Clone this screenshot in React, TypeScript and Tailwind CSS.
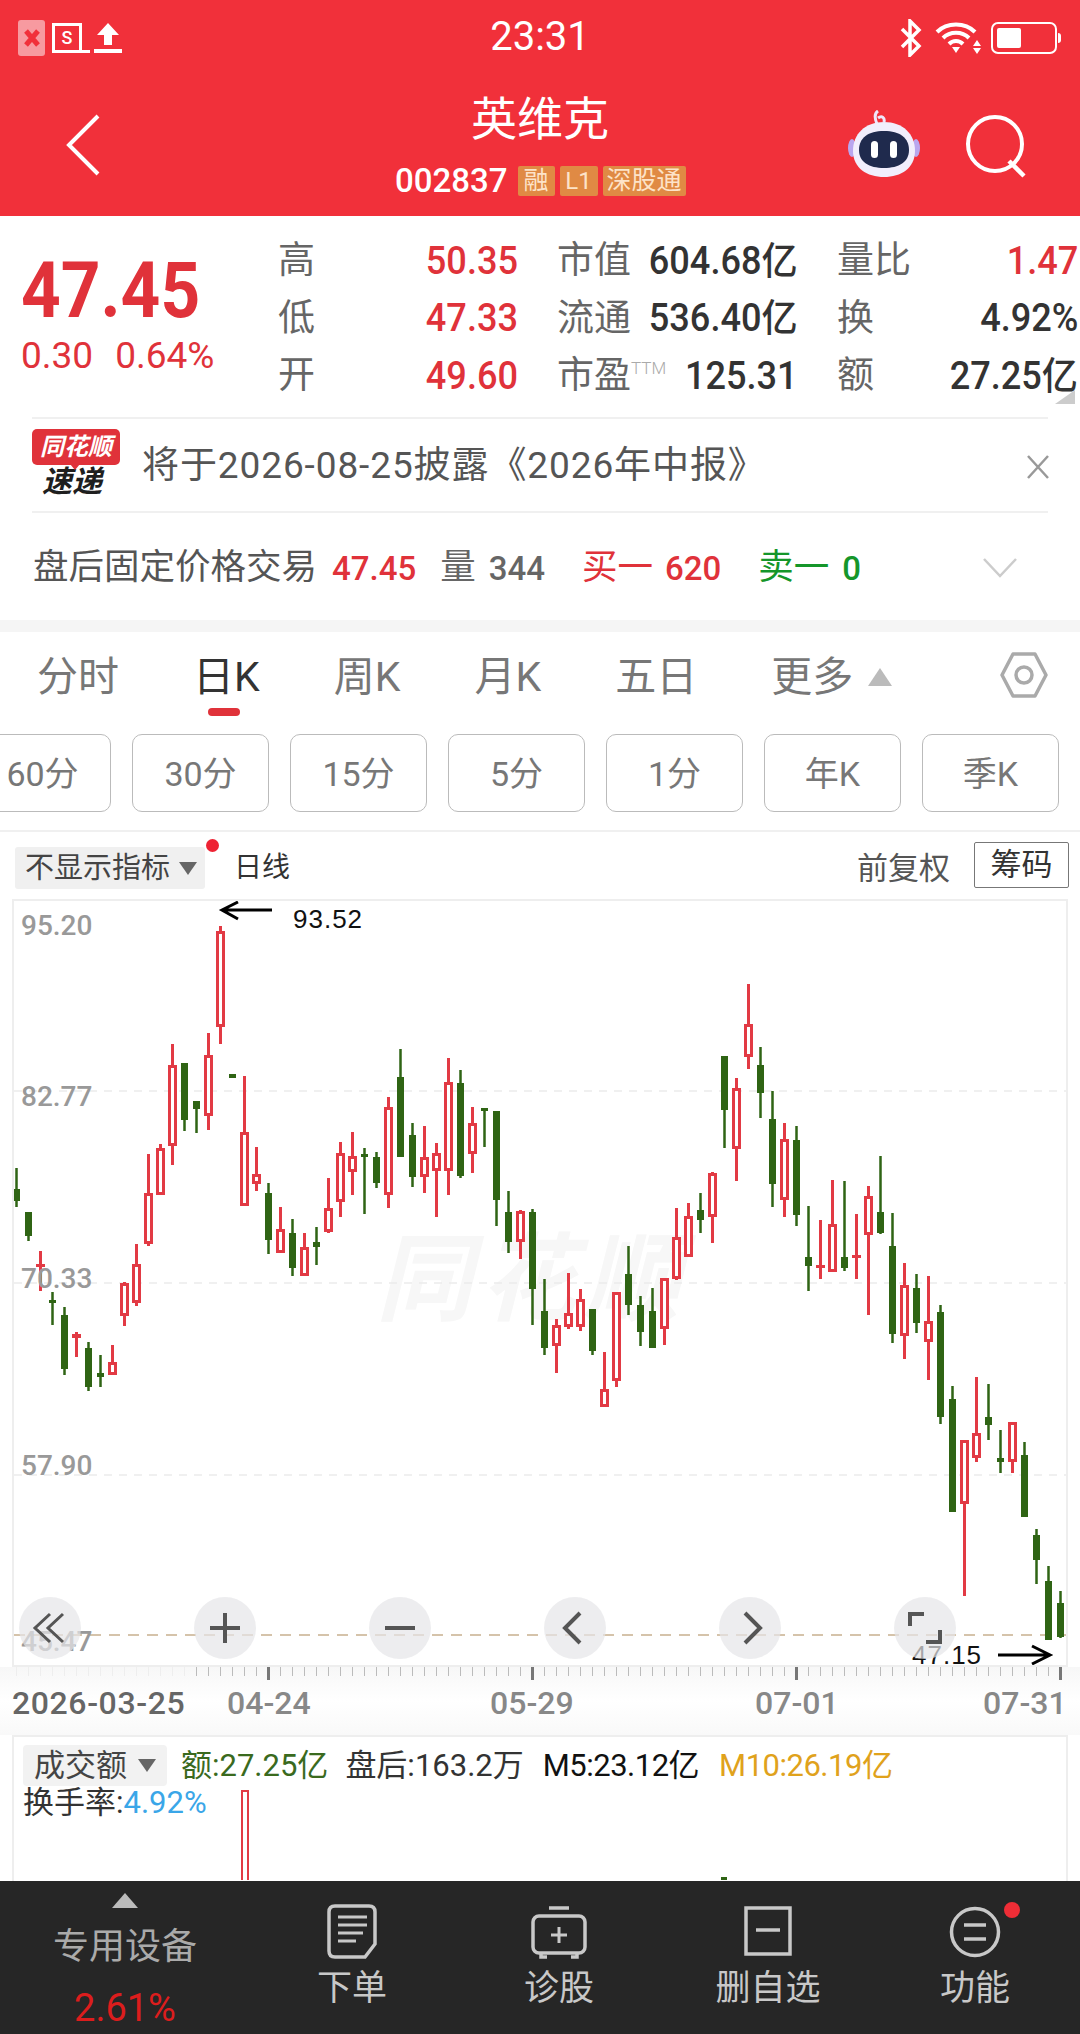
import React from "react";

type C = [string, number, number, number, number];
const candles: C[] = [
  ["g",1168,1189,1201,1207],["g",1212,1212,1236,1241],["r",1251,1264,1267,1291],["g",1292,1300,1303,1325],
  ["g",1307,1315,1369,1375],["r",1332,1334,1338,1357],["g",1342,1348,1387,1391],["g",1355,1373,1377,1387],
  ["r",1345,1362,1375,1375],["r",1282,1283,1316,1326],["r",1244,1264,1303,1306],["r",1154,1193,1244,1246],
  ["r",1144,1148,1195,1195],["r",1044,1065,1146,1165],["g",1063,1063,1120,1131],["g",1101,1101,1109,1133],
  ["r",1033,1055,1116,1130],["r",926,931,1027,1044],["g",1074,1074,1078,1078],["r",1076,1132,1206,1206],
  ["r",1147,1174,1184,1191],["g",1183,1193,1240,1254],["r",1207,1229,1253,1253],["g",1219,1233,1268,1276],
  ["r",1233,1247,1276,1276],["g",1227,1242,1247,1265],["r",1178,1208,1232,1233],["r",1142,1153,1202,1217],
  ["r",1132,1156,1172,1195],["g",1148,1154,1157,1214],["g",1152,1157,1183,1188],["r",1097,1107,1195,1208],
  ["g",1049,1077,1157,1157],["g",1123,1135,1177,1187],["r",1126,1157,1177,1193],["r",1143,1153,1171,1217],
  ["r",1058,1082,1171,1195],["g",1070,1083,1176,1178],["r",1107,1123,1154,1173],["g",1108,1108,1110,1147],
  ["g",1111,1111,1200,1226],["g",1191,1212,1242,1253],["r",1210,1211,1242,1259],["g",1209,1212,1289,1325],
  ["g",1279,1311,1348,1355],["r",1319,1325,1346,1373],["r",1273,1313,1327,1329],["r",1289,1299,1327,1331],
  ["g",1309,1309,1351,1355],["r",1352,1389,1407,1407],["r",1292,1292,1381,1387],["g",1246,1274,1305,1315],
  ["g",1296,1305,1332,1346],["g",1288,1311,1348,1348],["r",1278,1278,1329,1345],["r",1208,1237,1279,1280],
  ["r",1203,1216,1257,1257],["g",1193,1210,1220,1233],["r",1172,1173,1217,1243],["g",1056,1056,1110,1148],
  ["r",1078,1088,1149,1181],["r",984,1024,1057,1069],["g",1047,1065,1093,1118],["g",1091,1119,1184,1207],
  ["r",1123,1139,1200,1217],["g",1126,1140,1215,1226],["g",1206,1257,1266,1291],["r",1220,1265,1268,1279],
  ["r",1180,1224,1272,1272],["g",1181,1257,1268,1271],["r",1214,1255,1258,1279],["r",1186,1196,1235,1315],
  ["g",1156,1212,1233,1234],["g",1213,1246,1334,1343],["r",1263,1285,1336,1359],["g",1274,1288,1323,1333],
  ["r",1276,1321,1342,1380],["g",1305,1312,1417,1424],["g",1386,1399,1512,1512],["r",1440,1440,1504,1596],
  ["r",1377,1433,1458,1462],["g",1384,1417,1425,1440],["g",1430,1458,1462,1473],["r",1422,1422,1462,1473],
  ["g",1442,1455,1517,1517],["g",1529,1535,1560,1584],["g",1566,1581,1640,1640],["g",1591,1603,1637,1638],
];
const RED = "#e23a44";
const GREEN = "#2f6414";

function Candle({ c, i }: { c: C; i: number }) {
  const x = 16.5 + 12 * i;
  const [t, h, top, bot, l] = c;
  if (t === "r") {
    const small = bot - top < 8;
    return (
      <g>
        <rect x={x - 1.5} y={h} width={3} height={l - h} fill={RED} />
        {small ? (
          <rect x={x - 4.5} y={top} width={9} height={Math.max(bot - top, 3)} fill={RED} />
        ) : (
          <rect x={x - 3} y={top + 1.5} width={6} height={bot - top - 3} fill="#fff" stroke={RED} strokeWidth={3} />
        )}
      </g>
    );
  }
  return (
    <g>
      <rect x={x - 1.25} y={h} width={2.5} height={l - h} fill={GREEN} />
      <rect x={x - 3.5} y={top} width={7} height={Math.max(bot - top, 3)} fill={GREEN} />
    </g>
  );
}

function StatusBar() {
  return (
    <div className="relative h-[76px] flex items-center justify-between pl-[18px] pr-[20px]">
      <div className="flex items-center">
        <div className="w-[27px] h-[36px] bg-[#f79aa0] rounded-[3px] flex items-center justify-center">
          <svg width="18" height="20" viewBox="0 0 18 20"><path d="M3 3 L15 17 M15 3 L3 17" stroke="#f1303a" strokeWidth="5" /></svg>
        </div>
        <div className="ml-[7px] w-[30px] h-[30px] border-[3px] border-white relative flex items-center justify-center text-[18px] leading-none font-medium text-white">
          S
          <div className="absolute -left-[3px] -bottom-[3px] w-[38px] h-[3px] bg-white" />
        </div>
        <svg className="ml-[12px]" width="28" height="32" viewBox="0 0 28 32">
          <path d="M14 1 L25 13 H18 V23 H10 V13 H3 Z" fill="#fff" />
          <rect x="0" y="27" width="28" height="4" fill="#fff" />
        </svg>
      </div>
      <div className="absolute left-0 right-0 top-[13px] text-center text-white text-[40px] leading-[48px]">23:31</div>
      <div className="flex items-center">
        <svg width="24" height="38" viewBox="0 0 24 38">
          <path d="M3 10 L20 27 L11 36 V2 L20 11 L3 28" fill="none" stroke="#fff" strokeWidth="3.5" />
        </svg>
        <svg className="ml-[12px]" width="46" height="32" viewBox="0 0 46 32">
          <path d="M2 10 C12 0 30 0 40 10" fill="none" stroke="#fff" strokeWidth="4" />
          <path d="M8 16 C15 9 27 9 34 16" fill="none" stroke="#fff" strokeWidth="4" />
          <path d="M14 22 C18 18 24 18 28 22" fill="none" stroke="#fff" strokeWidth="4" />
          <path d="M17 25 H25 L21 31 Z" fill="#fff" />
          <path d="M42 18 L46 24 H38 Z M38 26 H46 L42 32 Z" fill="#fff" />
        </svg>
        <div className="ml-[13px] w-[66px] h-[32px] border-2 border-white rounded-[7px] p-[4px] relative -translate-x-[3px]">
          <div className="w-[24px] h-full bg-white rounded-[2px]" />
          <div className="absolute -right-[6px] top-[9px] w-[3px] h-[10px] bg-white rounded-r" />
        </div>
      </div>
    </div>
  );
}

function Robot() {
  return (
    <svg width="74" height="68" viewBox="0 0 74 68">
      <path d="M30 14 C27 7 28 3 31 1 M31 8 C35 5 38 8 37 12" fill="none" stroke="#efe7fb" strokeWidth="3" />
      <ellipse cx="5" cy="38" rx="4" ry="9" fill="#b9a6ee" />
      <ellipse cx="69" cy="38" rx="4" ry="9" fill="#b9a6ee" />
      <path d="M37 12 C56 12 68 24 68 41 C68 58 54 67 37 67 C20 67 6 58 6 41 C6 24 18 12 37 12 Z" fill="#f1eefc" />
      <path d="M37 21 C53 21 62 28 62 40 C62 52 52 58 37 58 C22 58 12 52 12 40 C12 28 21 21 37 21 Z" fill="#1f2a4d" />
      <rect x="24" y="31" width="7" height="17" rx="3.5" fill="#fff" />
      <rect x="43" y="31" width="7" height="17" rx="3.5" fill="#fff" />
    </svg>
  );
}

function Header() {
  return (
    <div className="shrink-0 h-[216px] bg-[#f1303a] text-white">
      <StatusBar />
      <div className="relative h-[140px]">
        <svg className="absolute left-[66px] top-[38px]" width="34" height="62" viewBox="0 0 34 62">
          <path d="M32 2 L3 31 L32 60" fill="none" stroke="#fff" strokeWidth="4" />
        </svg>
        <div className="text-center text-[46px] leading-[56px] pt-[15px]">英维克</div>
        <div className="absolute left-[395px] top-[90px] flex items-center">
          <span className="text-[33px] leading-[30px] font-medium mr-[10px]">002837</span>
          <span className="h-[30px] w-[37px] rounded-[2px] bg-[#e08a44] text-[#fde3c8] text-[25px] leading-[30px] text-center">融</span>
          <span className="ml-[5px] h-[30px] w-[38px] rounded-[2px] bg-[#e08a44] text-[#fde3c8] text-[24px] leading-[30px] text-center">L1</span>
          <span className="ml-[5px] h-[30px] w-[83px] rounded-[2px] bg-[#e08a44] text-[#fde3c8] text-[25px] leading-[30px] text-center">深股通</span>
        </div>
        <div className="absolute left-[847px] top-[34px]"><Robot /></div>
        <svg className="absolute left-[964px] top-[38px]" width="64" height="64" viewBox="0 0 64 64">
          <circle cx="31" cy="30" r="27" fill="none" stroke="#fff" strokeWidth="4" />
          <path d="M45 47 L60 62" stroke="#fff" strokeWidth="4.5" />
        </svg>
      </div>
    </div>
  );
}

function Stat({ label, value, red, sup }: { label: string; value: string; red?: boolean; sup?: boolean }) {
  return (
    <div className="h-[57.5px] flex items-center justify-between whitespace-nowrap">
      <span className="text-[37px] leading-none text-[#666] flex items-start">
        {label}
        {sup && <span className="text-[17px] leading-[18px] text-[#aaa] font-light mt-[2px]">TTM</span>}
      </span>
      <span className={`text-[38px] leading-none font-medium origin-right scale-x-[0.95] ${red ? "text-[#e0323a]" : "text-[#333]"}`}>{value}</span>
    </div>
  );
}

function Quote() {
  return (
    <div className="shrink-0 h-[404px] bg-white relative overflow-hidden">
      <div className="flex items-start pt-[16px] h-[201px]">
        <div className="w-[278px] pl-[21px] pt-[21px] shrink-0">
          <div className="text-[77px] leading-[76px] font-bold text-[#e0323a] origin-left scale-x-[0.9]">47.45</div>
          <div className="flex mt-[7px] text-[37px] leading-[40px] text-[#e0323a]">
            <span>0.30</span>
            <span className="ml-[22px]">0.64%</span>
          </div>
        </div>
        <div className="grid grid-cols-[240px_241px_241px] gap-x-[39px]">
          <Stat label="高" value="50.35" red />
          <Stat label="市值" value="604.68亿" />
          <Stat label="量比" value="1.47" red />
          <Stat label="低" value="47.33" red />
          <Stat label="流通" value="536.40亿" />
          <Stat label="换" value="4.92%" />
          <Stat label="开" value="49.60" red />
          <Stat label="市盈" value="125.31" sup />
          <Stat label="额" value="27.25亿" />
        </div>
      </div>
      <div className="absolute right-[5px] top-[174px] w-0 h-0 border-l-[20px] border-l-transparent border-b-[14px] border-b-[#ccc]" />
      <div className="mx-[32px] h-[96px] border-y-2 border-[#f0f0f0] flex items-center relative">
        <div className="w-[90px] h-[72px] shrink-0 relative">
          <div className="w-[88px] h-[36px] bg-[#e0323a] rounded-[5px] text-white text-[24px] leading-[36px] text-center font-bold italic">同花顺</div>
          <div className="absolute left-[38px] top-[35px] w-0 h-0 border-x-[5px] border-x-transparent border-t-[6px] border-t-[#e0323a]" />
          <div className="text-[#1f1f1f] text-[30px] leading-[34px] pl-[10px] font-bold italic">速递</div>
        </div>
        <div className="ml-[20px] text-[37px] tracking-[0.9px] leading-none text-[#555] whitespace-nowrap">将于2026-08-25披露《2026年中报》</div>
        <svg className="absolute right-[-2px] top-[36px]" width="24" height="24" viewBox="0 0 24 24">
          <path d="M2 1 L22 23 M22 1 L2 23" stroke="#999" strokeWidth="2.5" />
        </svg>
      </div>
      <div className="flex items-center h-[110px] pl-[33px] text-[35.5px] leading-none whitespace-nowrap">
        <span className="text-[#555]">盘后固定价格交易</span>
        <span className="ml-[15px] text-[33px] font-medium text-[#e0323a]">47.45</span>
        <span className="ml-[24px] text-[#666]">量</span>
        <span className="ml-[13px] text-[33px] text-[#666] font-medium">344</span>
        <span className="ml-[37px] text-[#e0323a]">买一</span>
        <span className="ml-[12px] text-[33px] font-medium text-[#e0323a]">620</span>
        <span className="ml-[37px] text-[#15962a]">卖一</span>
        <span className="ml-[13px] text-[33px] font-medium text-[#15962a]">0</span>
        <svg className="absolute left-[983px] top-[342px]" width="34" height="20" viewBox="0 0 34 20">
          <path d="M1 1 L17 18 L33 1" fill="none" stroke="#ccc" strokeWidth="2.5" />
        </svg>
      </div>
    </div>
  );
}

function Tabs() {
  const periods = ["60分", "30分", "15分", "5分", "1分", "年K", "季K"];
  return (
    <div className="shrink-0">
      <div className="h-[12px] bg-[#f5f5f5]" />
      <div className="h-[91px] relative flex items-start pl-[37px] pt-[21px] gap-[74px] text-[41px] leading-[48px] text-[#777] whitespace-nowrap">
        <span>分时</span>
        <span className="relative text-[#333]">
          日K
          <div className="absolute left-[15px] top-[55px] w-[32px] h-[8px] rounded-full bg-[#e0323a]" />
        </span>
        <span>周K</span>
        <span>月K</span>
        <span>五日</span>
        <span className="flex items-center">
          更多
          <span className="ml-[15px] w-0 h-0 border-x-[12px] border-x-transparent border-b-[18px] border-b-[#bbb]" />
        </span>
        <svg className="absolute left-[1000px] top-[20px]" width="48" height="46" viewBox="0 0 48 46">
          <path d="M13 2 H35 L46 23 L35 44 H13 L2 23 Z" fill="none" stroke="#aaa" strokeWidth="3.5" strokeLinejoin="round" />
          <circle cx="24" cy="23" r="8" fill="none" stroke="#aaa" strokeWidth="3.5" />
        </svg>
      </div>
      <div className="h-[109px] border-b-2 border-[#f0f0f0] overflow-hidden">
        <div className="flex gap-[21px] ml-[-26px] pt-[11px]">
          {periods.map((p) => (
            <div key={p} className="shrink-0 w-[137px] h-[78px] border border-[#bbb] rounded-[10px] flex items-center justify-center pt-[3px] text-[34px] text-[#777]">
              {p}
            </div>
          ))}
        </div>
      </div>
      <div className="h-[67px] relative flex items-center pl-[15px] pt-[5px] whitespace-nowrap">
        <div className="w-[190px] h-[42px] bg-[#f0f0f0] rounded-[3px] flex items-center pl-[10px] text-[29px] text-[#444] leading-none">
          不显示指标
          <span className="ml-[9px] w-0 h-0 border-x-[9px] border-x-transparent border-t-[13px] border-t-[#666]" />
        </div>
        <div className="absolute left-[206px] top-[7px] w-[13px] h-[13px] rounded-full bg-[#ee2233]" />
        <span className="ml-[29px] text-[28px] leading-none text-[#333]">日线</span>
        <span className="ml-auto text-[31px] leading-none text-[#555]">前复权</span>
        <div className="ml-[24px] mr-[11px] -mt-[7px] w-[95px] h-[46px] border border-[#777] rounded-[2px] flex items-center justify-center text-[31px] leading-none text-[#333]">筹码</div>
      </div>
    </div>
  );
}

function CircleBtn({ children }: { children: React.ReactNode }) {
  return (
    <div className="w-[62px] h-[62px] rounded-full bg-[#e6e6e8]/70 flex items-center justify-center shrink-0">
      <svg width="62" height="62" viewBox="0 0 62 62" fill="none" stroke="#555" strokeWidth="4">
        {children}
      </svg>
    </div>
  );
}

function Chart() {
  const labels: [string, string][] = [
    ["95.20", "top-[7px]"],
    ["82.77", "top-[178px]"],
    ["70.33", "top-[360px]"],
    ["57.90", "top-[547px]"],
    ["45.47", "top-[723px]"],
  ];
  return (
    <div className="shrink-0 mx-[12px] h-[768px] border-2 border-[#eee] relative">
      <div className="absolute left-[362px] top-[331px] text-[96px] leading-none font-bold italic text-[#f7f7f7] tracking-[8px] whitespace-nowrap">同花顺</div>
      <svg className="absolute left-0 top-0" width="1052" height="764" viewBox="14 901 1052 764">
        <g stroke="#ececec" strokeWidth="1.5" strokeDasharray="8 7">
          <line x1="14" y1="1091" x2="1066" y2="1091" />
          <line x1="14" y1="1283" x2="1066" y2="1283" />
          <line x1="14" y1="1475" x2="1066" y2="1475" />
        </g>
        <line x1="14" y1="1635" x2="1066" y2="1635" stroke="#c7b08f" strokeWidth="1.5" strokeDasharray="11 8" />
        {candles.map((c, i) => (
          <Candle key={i} c={c} i={i} />
        ))}
        <path d="M222 910 H272 M238 902 L222 910 L238 919" fill="none" stroke="#000" strokeWidth="3" />
        <path d="M998 1655 H1048 M1032 1646 L1050 1655 L1032 1664" fill="none" stroke="#000" strokeWidth="3" />
      </svg>
      {labels.map(([t, cls]) => (
        <div key={t} className={`absolute left-[7px] text-[28px] leading-[36px] font-medium text-[#999] ${cls}`}>{t}</div>
      ))}
      <div className="absolute left-[279px] top-[3px] text-[26px] leading-[30px] tracking-[1px] text-[#111] font-['Liberation_Sans',sans-serif]">93.52</div>
      <div className="absolute left-[898px] top-[739px] text-[26px] leading-[30px] tracking-[1px] text-[#111] font-['Liberation_Sans',sans-serif]">47.15</div>
      <div className="absolute left-[5px] top-[696px] flex gap-[113px]">
        <CircleBtn><path d="M31 17 L16 31 L31 45 M44 17 L29 31 L44 45" strokeWidth="3" /></CircleBtn>
        <CircleBtn><path d="M31 16 V46 M16 31 H46" /></CircleBtn>
        <CircleBtn><path d="M16 31 H46" /></CircleBtn>
        <CircleBtn><path d="M36 16 L21 31 L36 46" /></CircleBtn>
        <CircleBtn><path d="M26 16 L41 31 L26 46" /></CircleBtn>
        <CircleBtn><path d="M16 29 V17 H30 M46 33 V45 H32" /></CircleBtn>
      </div>
    </div>
  );
}

function Axis() {
  const ticks = Array.from({ length: 88 }, (_, i) => i);
  const dates: [string, string][] = [
    ["04-24", "left-[227px]"],
    ["05-29", "left-[490px]"],
    ["07-01", "left-[755px]"],
    ["07-31", "left-[983px]"],
  ];
  return (
    <div className="shrink-0 h-[68px] relative bg-gradient-to-b from-[#f7f7f7] via-[#fff] to-[#f9f9f9]">
      <svg className="absolute left-0 top-0" width="1080" height="14" viewBox="0 0 1080 14">
        {ticks.map((i) => {
          const x = 16.5 + 12 * i;
          const major = i === 21 || i === 43 || i === 65 || i === 87;
          if (major) return <rect key={i} x={x - 1.5} y={0} width={3} height={13} fill="#777" />;
          return <rect key={i} x={x - 0.5} y={0} width={1} height={9} fill={i < 15 ? "#eee" : "#bbb"} />;
        })}
      </svg>
      <div className="absolute left-[12px] top-[18px] text-[32px] leading-[36px] font-medium text-[#666] tracking-[0.6px]">2026-03-25</div>
      {dates.map(([d, cls]) => (
        <div key={d} className={`absolute top-[18px] text-[32px] leading-[36px] font-medium text-[#888] ${cls}`}>{d}</div>
      ))}
    </div>
  );
}

function Volume() {
  return (
    <div className="min-h-0 flex-1 mx-[12px] border-x-2 border-t-2 border-[#eee] relative overflow-hidden">
      <svg className="absolute left-0 top-0" width="1052" height="143" viewBox="14 1738 1052 143">
        <rect x="242" y="1792" width="6" height="90" fill="#fff" stroke={RED} strokeWidth="2" />
        <rect x="721" y="1878" width="6" height="3" fill={GREEN} />
      </svg>
      <div className="relative flex items-center h-[41px] mt-[8px] ml-[9px] whitespace-nowrap text-[31px] leading-none">
        <div className="w-[144px] h-[41px] bg-[#f2f2f2] rounded-[4px] flex items-center pl-[11px] text-[#444]">
          成交额
          <span className="ml-[11px] w-0 h-0 border-x-[9px] border-x-transparent border-t-[13px] border-t-[#666]" />
        </div>
        <span className="ml-[14px] text-[#3a6a1e]">额:27.25亿</span>
        <span className="ml-[17px] text-[#333]">盘后:163.2万</span>
        <span className="ml-[19px] tracking-[-0.5px] text-[#111]">M5:23.12亿</span>
        <span className="ml-[20px] tracking-[-0.5px] text-[#e0a21c]">M10:26.19亿</span>
      </div>
      <div className="relative ml-[9px] mt-[1px] text-[31px] leading-[32px] text-[#333] whitespace-nowrap">
        换手率:<span className="text-[#3aa6e8]">4.92%</span>
      </div>
    </div>
  );
}

function BottomItem({ label, children, cls }: { label: string; children: React.ReactNode; cls: string }) {
  return (
    <div className={`absolute top-0 flex flex-col items-center w-[120px] ${cls}`}>
      <div className="h-[85px] flex items-end relative">{children}</div>
      <div className="mt-[2px] text-[35px] leading-[42px] text-[#c8c8c8]">{label}</div>
    </div>
  );
}

function BottomBar() {
  return (
    <div className="shrink-0 h-[153px] bg-[#262626] relative">
      <div className="absolute left-0 top-0 w-[250px] flex flex-col items-center">
        <div className="mt-[12px] w-0 h-0 border-x-[13px] border-x-transparent border-b-[15px] border-b-[#bbb]" />
        <div className="mt-[17px] text-[36px] leading-[44px] text-[#aaa]">专用设备</div>
        <div className="mt-[17px] text-[38px] leading-[44px] text-[#dc1d1d]">2.61%</div>
      </div>
      <BottomItem label="下单" cls="left-[292px]">
        <svg width="50" height="55" viewBox="0 0 50 55" fill="none" stroke="#c8c8c8" strokeWidth="3.5" className="mb-[7px]">
          <path d="M8 2 H42 Q48 2 48 8 V40 L38 53 H8 Q2 53 2 47 V8 Q2 2 8 2 Z" />
          <path d="M11 13 H40 M11 21 H40 M11 29 H36 M11 37 H29" strokeWidth="3" />
        </svg>
      </BottomItem>
      <BottomItem label="诊股" cls="left-[499px]">
        <svg width="56" height="53" viewBox="0 0 56 53" fill="none" stroke="#c8c8c8" strokeWidth="3.5" className="mb-[7px]">
          <path d="M18 2 H38" />
          <rect x="2" y="10" width="52" height="37" rx="6" />
          <path d="M28 21 V37 M20 29 H36" strokeWidth="3" />
          <path d="M10 47 V51 H16 M40 51 H46 V47" />
        </svg>
      </BottomItem>
      <BottomItem label="删自选" cls="left-[708px]">
        <svg width="48" height="50" viewBox="0 0 48 50" fill="none" stroke="#c8c8c8" strokeWidth="3.5" className="mb-[10px]">
          <rect x="2" y="2" width="44" height="46" />
          <path d="M12 24 H36" />
        </svg>
      </BottomItem>
      <BottomItem label="功能" cls="left-[915px]">
        <svg width="52" height="52" viewBox="0 0 52 52" fill="none" stroke="#c8c8c8" strokeWidth="3.5" className="mb-[8px]">
          <circle cx="26" cy="26" r="23.5" />
          <path d="M15 19 H37 M15 33 H37" />
        </svg>
      </BottomItem>
      <div className="absolute left-[1004px] top-[21px] w-[16px] h-[16px] rounded-full bg-[#ee2d36]" />
    </div>
  );
}

export default function App() {
  return (
    <div className="w-[1080px] h-[2034px] overflow-hidden flex flex-col bg-white font-['Roboto','Noto_Sans_CJK_SC',sans-serif]">
      <Header />
      <Quote />
      <Tabs />
      <Chart />
      <Axis />
      <Volume />
      <BottomBar />
    </div>
  );
}
